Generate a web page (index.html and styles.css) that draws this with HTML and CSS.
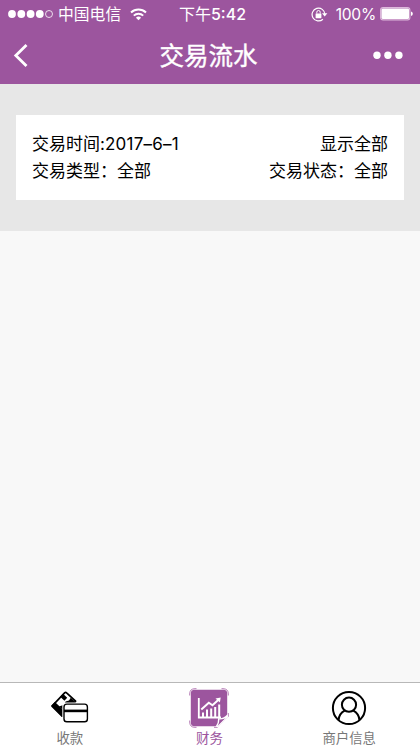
FILE: index.html
```html
<!DOCTYPE html>
<html lang="zh-CN">
<head>
<meta charset="utf-8">
<title>交易流水</title>
<link rel="stylesheet" href="styles.css">
</head>
<body>
<div class="app">
  <header class="header">
    <div class="status">
      <div class="status-left">
        <svg class="signal" width="46" height="10" viewBox="0 0 46 10"><g fill="#fff"><circle cx="4" cy="5" r="3.9"/><circle cx="13.3" cy="5" r="3.9"/><circle cx="22.6" cy="5" r="3.9"/><circle cx="31.8" cy="5" r="3.9"/></g><circle cx="41" cy="5" r="3.5" fill="none" stroke="#fff" stroke-width=".8"/></svg>
        <span class="carrier">中国电信</span>
        <svg class="wifi" width="17" height="13" viewBox="0 0 17 13"><g fill="none" stroke="#fff" stroke-width="2"><path d="M1 4.5a10.8 10.8 0 0 1 15 0"/><path d="M3.8 7.6a6.8 6.8 0 0 1 9.4 0"/></g><path d="M5.9 9.7a3.8 3.8 0 0 1 5.2 0L8.5 12.3z" fill="#fff"/></svg>
      </div>
      <span class="clock">下午<span class="time">5:42</span></span>
      <div class="status-right">
        <svg class="lock" width="17" height="15" viewBox="0 0 17 15"><path d="M13.9 7.3a6.4 6.4 0 1 0-2 4.9" fill="none" stroke="#fff" stroke-width="1.2"/><path d="M11 6.3h5.4L13.7 9.6z" fill="#fff"/><rect x="4.6" y="6.4" width="5.8" height="4.8" rx=".4" fill="#fff"/><path d="M5.8 6.5V5.2a1.7 1.7 0 0 1 3.4 0v1.3" fill="none" stroke="#fff"/></svg>
        <span class="percent">100%</span>
        <svg class="battery" width="33" height="14" viewBox="0 0 33 14"><rect x=".6" y=".6" width="29.3" height="12.3" rx="2.5" fill="none" stroke="#deb9dc" stroke-width="1.1"/><rect x="1.4" y="1.4" width="27.7" height="10.7" rx="1.5" fill="#fff"/><path d="M31 4.5q1.8.5 1.8 2.3T31 9z" fill="#fff"/></svg>
      </div>
    </div>
    <nav class="nav">
      <svg class="back" width="16" height="26" viewBox="0 0 16 26"><path d="M13.5 2 2.8 12.5 13.5 23" fill="none" stroke="#fff" stroke-width="2.8"/></svg>
      <h1 class="title">交易流水</h1>
      <svg class="more" width="30" height="8" viewBox="0 0 30 8"><g fill="#fff"><circle cx="3" cy="3.2" r="3.7"/><circle cx="13.9" cy="3.2" r="3.7"/><circle cx="24.9" cy="3.2" r="3.7"/></g></svg>
    </nav>
  </header>
  <section class="filters">
    <div class="card">
      <div class="row"><span>交易时间:<span class="date">2017–6–1</span></span><span>显示全部</span></div>
      <div class="row"><span>交易类型：全部</span><span>交易状态：全部</span></div>
    </div>
  </section>
  <main class="content"></main>
  <footer class="tabs">
    <div class="tab">
      <svg class="tab-icon" width="40" height="40" viewBox="0 0 40 40"><path d="M2 18.2 14.6 4.8q1-1 2 0l9 8.4-9 12-4.5 3z" fill="#fff" stroke="#000" stroke-width="1.7" stroke-linejoin="round"/><path d="m1.3 17.7 3.6-3.8 9.6 9-2.3 6zM10.2 8.7 13 5.8l4.2 4-2.8 2.9z"/><path d="m9 18.5 5-1.7 1.6-3.3 3.4-1 1.8-2.8 4.4 4-9.5 10z"/><rect x="12.3" y="14.4" width="27" height="21" rx="3" fill="#fff"/><rect x="14" y="16.1" width="23.4" height="17.6" rx="2.8" fill="#fff" stroke="#000" stroke-width="1.4"/><path d="M14 21.6h23.4v2.6H14z"/></svg>
      <span>收款</span>
    </div>
    <div class="tab active">
      <svg class="tab-icon" width="40" height="40" viewBox="0 0 40 40"><path d="M5.5 1.8h29Q38.2 1.8 38.2 5.5V28L28 38.2H5.5Q1.8 38.2 1.8 34.5v-29Q1.8 1.8 5.5 1.8z" fill="#9c559e"/><path d="M.7 7.5V6Q.7.7 6 .7h1.5M32.500.7H34q5.300 0 5.300 5.300v1.500M.7 32.500V34q0 5.300 5.300 5.300h1.500M39.300 25v3.500L28.500 39.300H25" fill="none" stroke="#b67cb6" stroke-width="1"/><path d="M27.500 38.200q2.300-2.500 2.200-7.400 5.500.4 8.500-3.300L38.500 29 29 38.500z" fill="#9c559e" stroke="#fff" stroke-width="1.300"/><g fill="none" stroke="#fff"><path d="M9.800 10v19.500H32" stroke-width="1.800"/><path d="m12.300 21.500 7.500-6.800 3.700 2.600 6.500-6" stroke-width="2"/><path d="M14 29v-4.500M18 29v-7.500M22.200 29v-8.500M26.200 29V19M30.200 29V16.500" stroke-width="2"/></g><path d="m26.500 10.400 5.200-.8-.8 5z" fill="#fff"/></svg>
      <span>财务</span>
    </div>
    <div class="tab">
      <svg class="tab-icon" width="40" height="40" viewBox="0 0 40 40"><g fill="none" stroke="#000" stroke-width="2"><circle cx="20" cy="20" r="16.100"/><circle cx="20" cy="16.700" r="7.100"/><path d="M9.500 32.200q.6-6.800 6.200-9.600M30.500 32.200q-.6-6.800-6.200-9.600"/></g></svg>
      <span>商户信息</span>
    </div>
  </footer>
</div>
</body>
</html>
```

FILE: styles.css
```css
* { box-sizing: border-box; }
body { margin: 0; font-family: Inter, "Noto Sans CJK SC", sans-serif; color: #000; }
svg { display: block; flex: none; }
.app { width: 420px; height: 746px; display: flex; flex-direction: column; background: #f8f8f8; overflow: hidden; }
.header { height: 84px; background: #9c559e; color: #fff; flex: none; }
.status { height: 27px; display: grid; grid-template-columns: 1fr auto 1fr; align-items: center; padding: 0 7px 0 8px; font-size: 16px; line-height: 27px; white-space: nowrap; }
.status-left, .status-right { display: flex; align-items: center; }
.status-right { justify-content: flex-end; }
.carrier { margin-left: 4px; font-size: 15.8px; padding-top: 1px; }
.wifi { margin-left: 9px; }
.clock { font-size: 16px; padding: 1px 0 0 4px; }
.time { font-weight: 500; }
.percent { margin: 0 4px 0 8px; font-size: 15.6px; letter-spacing: -.25px; }
.nav { height: 57px; display: grid; grid-template-columns: 1fr auto 1fr; align-items: center; padding: 0 16px 0 13px; }
.title { margin: 0; font-size: 24.5px; font-weight: 400; line-height: 36px; -webkit-text-stroke: .4px #fff; }
.more { justify-self: end; overflow: visible; }
.filters { height: 147px; padding: 31px 16px; background: #e7e7e7; flex: none; }
.card { height: 85px; padding: 16px 16px 0 16px; background: #fff; font-size: 17px; line-height: 26.5px; }
.row { display: flex; justify-content: space-between; white-space: nowrap; }
.date { letter-spacing: .25px; }
.content { flex: 1; }
.tabs { height: 64px; display: grid; grid-template-columns: repeat(3, 1fr); padding-right: 1px; background: #fff; border-top: 1px solid #b8b8b8; flex: none; }
.tab { display: flex; flex-direction: column; align-items: center; padding-top: 5px; font-size: 13.4px; line-height: 20px; color: #777; }
.active { color: #9c559e; }
```
